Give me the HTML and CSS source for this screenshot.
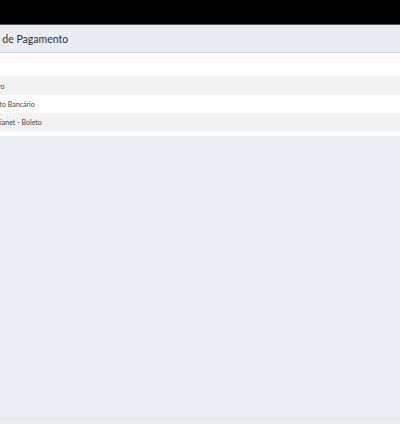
FILE: index.html
```html
<!DOCTYPE html>
<html lang="pt-BR">
<head>
<meta charset="utf-8">
<title>Formas de Pagamento</title>
<link rel="stylesheet" href="styles.css">
</head>
<body>
<div class="topbar"></div>
<div class="header"><h1 class="title">Formas de Pagamento</h1></div>
<div class="panel">
  <table class="list">
    <thead><tr><th></th></tr></thead>
    <tbody>
      <tr class="odd"><td>Dinheiro</td></tr>
      <tr><td>Depósito Bancário</td></tr>
      <tr class="odd"><td>Gerencianet - Boleto</td></tr>
    </tbody>
  </table>
</div>
<div class="content"></div>
<div class="footer"></div>
</body>
</html>
```

FILE: styles.css
```css
html, body {
  margin: 0;
  padding: 0;
  background: #eaedf2;
  font-family: Lato, "Noto Sans", sans-serif;
  color: #333;
  overflow: hidden;
}
.topbar {
  height: 24px;
  background: #000;
  border-bottom: 1px solid #5c5c5c;
}
.header {
  height: 27px;
  background: #e9ecf1;
  border-bottom: 1px solid #d3d7de;
  display: flex;
  align-items: center;
}
.title {
  margin: 0 0 0 -34px;
  font-size: 10.5px;
  font-weight: 400;
  color: #333;
  white-space: nowrap;
}
.panel {
  background: #fff;
  padding: 4px 0 5px;
}
.list {
  width: 100%;
  border-collapse: collapse;
  border-top: 1px solid #f4f4f4;
  font-size: 7px;
  color: #444;
}
.list th {
  height: 18px;
  padding: 0;
}
.list td {
  height: 18px;
  padding: 0;
  text-indent: -22px;
  white-space: nowrap;
}
.list tbody tr:first-child td {
  height: 19px;
}
.list tr.odd {
  background: #f2f2f2;
}
.content {
  height: 282px;
}
.footer {
  height: 5px;
  border-top: 1px solid #e1e3e7;
  background: #ebedf1;
}
```
